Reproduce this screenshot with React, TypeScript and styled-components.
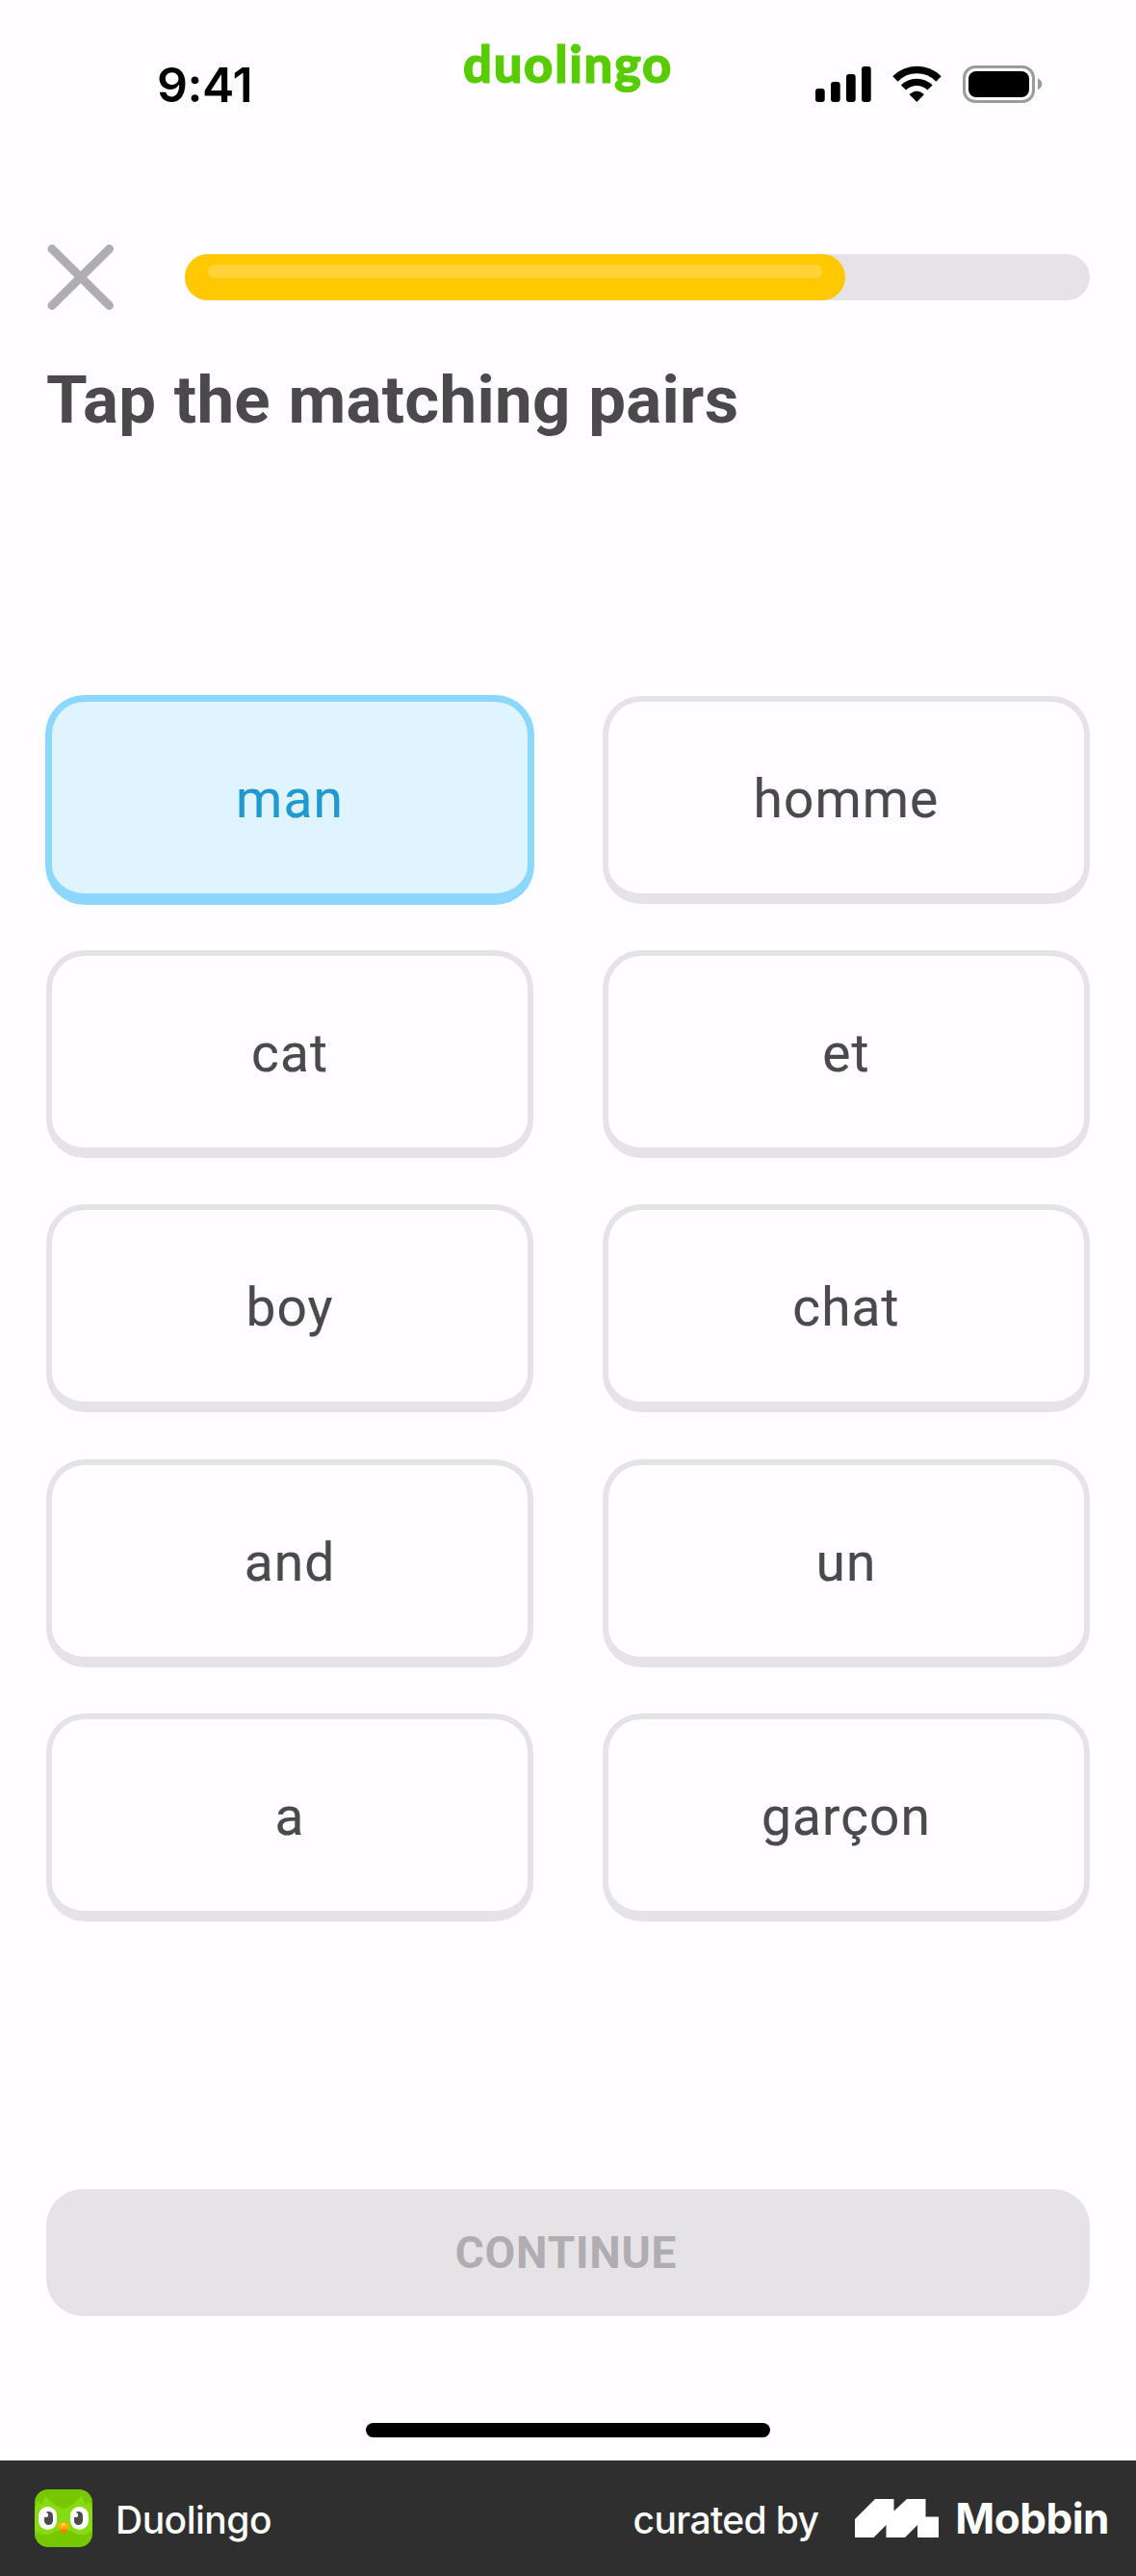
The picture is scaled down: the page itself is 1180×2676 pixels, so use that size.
import React, { useState } from "react";
import styled, { createGlobalStyle } from "styled-components";

const GlobalStyle = createGlobalStyle`
  * { box-sizing: border-box; }
  body { margin: 0; background: #fffdff; }
  button { font: inherit; padding: 0; border: 0; background: none; }
`;

const Screen = styled.div`
  width: 1180px;
  height: 2676px;
  display: flex;
  flex-direction: column;
  background: #fffdff;
  color: #4b494c;
  font-family: Roboto, "Liberation Sans", sans-serif;
`;

const StatusBar = styled.header`
  height: 254px;
  flex: none;
  display: grid;
  grid-template-columns: 481px 1fr 333px;
  align-items: start;
`;

const Clock = styled.div`
  padding: 58px 0 0 163px;
  font: 600 50px/60px Inter, sans-serif;
  letter-spacing: -0.4px;
  color: #000;
`;

const Wordmark = styled.div`
  padding-top: 35px;
  font: 900 52.5px/62px Lato, sans-serif;
  letter-spacing: 1.7px;
  color: #58cc02;
  -webkit-text-stroke: 1.2px #58cc02;
`;

const StatusIcons = styled.div`
  display: flex;
  padding-top: 67px;

  svg { display: block; }
`;

const LessonBar = styled.div`
  flex: none;
  height: 68px;
  display: flex;
  align-items: center;
  gap: 73px;
  padding: 0 48px 0 49px;
`;

const CloseButton = styled.button`
  width: 70px;
  height: 68px;
  svg { display: block; }
`;

const Track = styled.div`
  flex: 1;
  height: 48px;
  border-radius: 24px;
  background: #e5e3e6;
`;

const Fill = styled.div<{ $percent: number }>`
  width: ${(p) => p.$percent}%;
  height: 48px;
  padding: 11px 24px 0;
  border-radius: 24px;
  background: #ffc800;
`;

const Shine = styled.div`
  height: 14px;
  border-radius: 7px;
  background: #ffd338;
`;

const Title = styled.h1`
  flex: none;
  height: 401px;
  margin: 0;
  padding: 54px 0 0 48px;
  font-size: 69px;
  line-height: 80px;
  font-weight: 700;
  letter-spacing: 0.3px;
  word-spacing: 1px;
`;

const Board = styled.main`
  flex: none;
  display: grid;
  grid-template-columns: 506px 506px;
  grid-auto-rows: 216px;
  column-gap: 72px;
  row-gap: 48.2px;
  padding: 0 48px;
`;

const Card = styled.button<{ $selected: boolean }>`
  display: flex;
  align-items: center;
  justify-content: center;
  padding-top: 3px;
  border: 6px solid ${(p) => (p.$selected ? "#8cd8fc" : "#e5e3e6")};
  border-bottom-width: 11px;
  border-radius: 40px;
  background: ${(p) => (p.$selected ? "#e0f4ff" : "#fffdff")};
  color: ${(p) => (p.$selected ? "#1f99cf" : "#4b494c")};
  box-shadow: ${(p) => (p.$selected ? "0 0 0 1px #8cd8fc" : "none")};
  font-size: 55px;
  letter-spacing: 1.1px;
  -webkit-text-stroke: 0.2px currentColor;
`;

const Footer = styled.footer`
  margin-top: auto;
  display: flex;
  flex-direction: column;
  align-items: center;
`;

const ContinueButton = styled.button`
  width: 1084px;
  height: 132px;
  border-radius: 38px;
  background: #e5e3e6;
  color: #afadb1;
  font-size: 46px;
  font-weight: 700;
  letter-spacing: 0.8px;
  padding-right: 4px;
`;

const HomeIndicator = styled.div`
  width: 420px;
  height: 15px;
  margin: 111px 0 24px;
  border-radius: 8px;
  background: #000;
`;

const Credit = styled.div`
  width: 100%;
  height: 120px;
  display: flex;
  align-items: center;
  padding: 0 28px 0 36px;
  background: #2f2f2f;
  color: #fff;
  font-family: Inter, sans-serif;

  svg { display: block; flex: none; }
`;

const AppName = styled.span`
  margin: 3px auto 0 24px;
  font-size: 39px;
  font-weight: 500;
  letter-spacing: -0.5px;
`;

const CuratedBy = styled.span`
  margin: 3px 38px 0 0;
  font-size: 39px;
  font-weight: 500;
  letter-spacing: -0.65px;
`;

const Brand = styled.span`
  margin-left: 17px;
  font-size: 44px;
  font-weight: 700;
  letter-spacing: -0.5px;
`;

const SignalIcons = () => (
  <svg width="240" height="42" viewBox="847 67 240 42">
    <rect x="847" y="92" width="9.7" height="14" rx="3" />
    <rect x="863" y="85" width="9.7" height="21" rx="3" />
    <rect x="879" y="77" width="9.7" height="29" rx="3" />
    <rect x="895" y="69" width="9.7" height="37" rx="3" />
    <g fill="none" stroke="#000">
      <path d="M930 82 A31.500 31.500 0 0 1 975 82" strokeWidth="7.600" />
      <path d="M938.500 91 A19.500 19.500 0 0 1 966 91" strokeWidth="7.400" />
    </g>
    <path d="M944.500 98 Q952.300 91 960 98 L952.300 106 Z" />
    <rect x="1001.500" y="69.500" width="72" height="36" rx="11.500" fill="none" stroke="#9c9b9d" strokeWidth="3" />
    <rect x="1006" y="74" width="63" height="27" rx="8" />
    <path d="M1078 81.300 Q1082.300 83.500 1082.300 87.300 Q1082.300 91 1078 93.300 Z" fill="#9c9b9d" />
  </svg>
);

const CloseIcon = () => (
  <svg width="70" height="68" viewBox="0 0 70 68">
    <path d="M5 4.600 L64.500 63.400 M64.500 4.600 L5 63.400" fill="none" stroke="#afadb0" strokeWidth="9" strokeLinecap="round" />
  </svg>
);

const OwlIcon = () => (
  <svg width="60" height="60" viewBox="0 0 60 60">
    <rect width="60" height="60" rx="14" fill="#78c800" />
    <path d="M0 22 L3 12 L7 16 L11 7 C17 12 22 19 30 20 C38 19 43 12 49 7 L53 16 L57 12 L60 22 V42 C56 48 43 49 38 43 H22 C17 49 4 48 0 42 Z" fill="#86dc14" />
    <rect x="4" y="18" width="19" height="24" rx="9.500" fill="#fff" />
    <rect x="37" y="18" width="19" height="24" rx="9.500" fill="#fff" />
    <rect x="10" y="23" width="9" height="14" rx="4.500" fill="#4b4b4b" />
    <rect x="41" y="23" width="9" height="14" rx="4.500" fill="#4b4b4b" />
    <circle cx="11.500" cy="26.500" r="2.600" fill="#fff" />
    <circle cx="42.500" cy="26.500" r="2.600" fill="#fff" />
    <path d="M25 39 H35 L33 44 Q30 47 27 44 Z" fill="#f57f00" />
    <path d="M23 39 Q25 34 30 34 Q35 34 37 39 Q34 41.500 30 41.500 Q26 41.500 23 39 Z" fill="#ffb100" />
    <ellipse cx="30" cy="36.500" rx="2.400" ry="1.600" fill="#ffd95a" />
  </svg>
);

const MobbinMark = () => (
  <svg width="87" height="40" viewBox="0 0 87 40">
    <path d="M0 21 L21 0 H40.500 V12.500 L54 0 H73.500 V18.500 H87 V40 H65 V27 L52 40 H32.500 V27 L19.500 40 H0 Z" fill="#fff" />
  </svg>
);

const words = ["man", "homme", "cat", "et", "boy", "chat", "and", "un", "a", "garçon"];

export default function App() {
  const [selected, setSelected] = useState("man");

  return (
    <Screen>
      <GlobalStyle />
      <StatusBar>
        <Clock>9:41</Clock>
        <Wordmark>duolingo</Wordmark>
        <StatusIcons>
          <SignalIcons />
        </StatusIcons>
      </StatusBar>
      <LessonBar>
        <CloseButton aria-label="Close">
          <CloseIcon />
        </CloseButton>
        <Track>
          <Fill $percent={73}>
            <Shine />
          </Fill>
        </Track>
      </LessonBar>
      <Title>Tap the matching pairs</Title>
      <Board>
        {words.map((word) => (
          <Card key={word} $selected={word === selected} onClick={() => setSelected(word)}>
            {word}
          </Card>
        ))}
      </Board>
      <Footer>
        <ContinueButton>CONTINUE</ContinueButton>
        <HomeIndicator />
        <Credit>
          <OwlIcon />
          <AppName>Duolingo</AppName>
          <CuratedBy>curated by</CuratedBy>
          <MobbinMark />
          <Brand>Mobbin</Brand>
        </Credit>
      </Footer>
    </Screen>
  );
}
